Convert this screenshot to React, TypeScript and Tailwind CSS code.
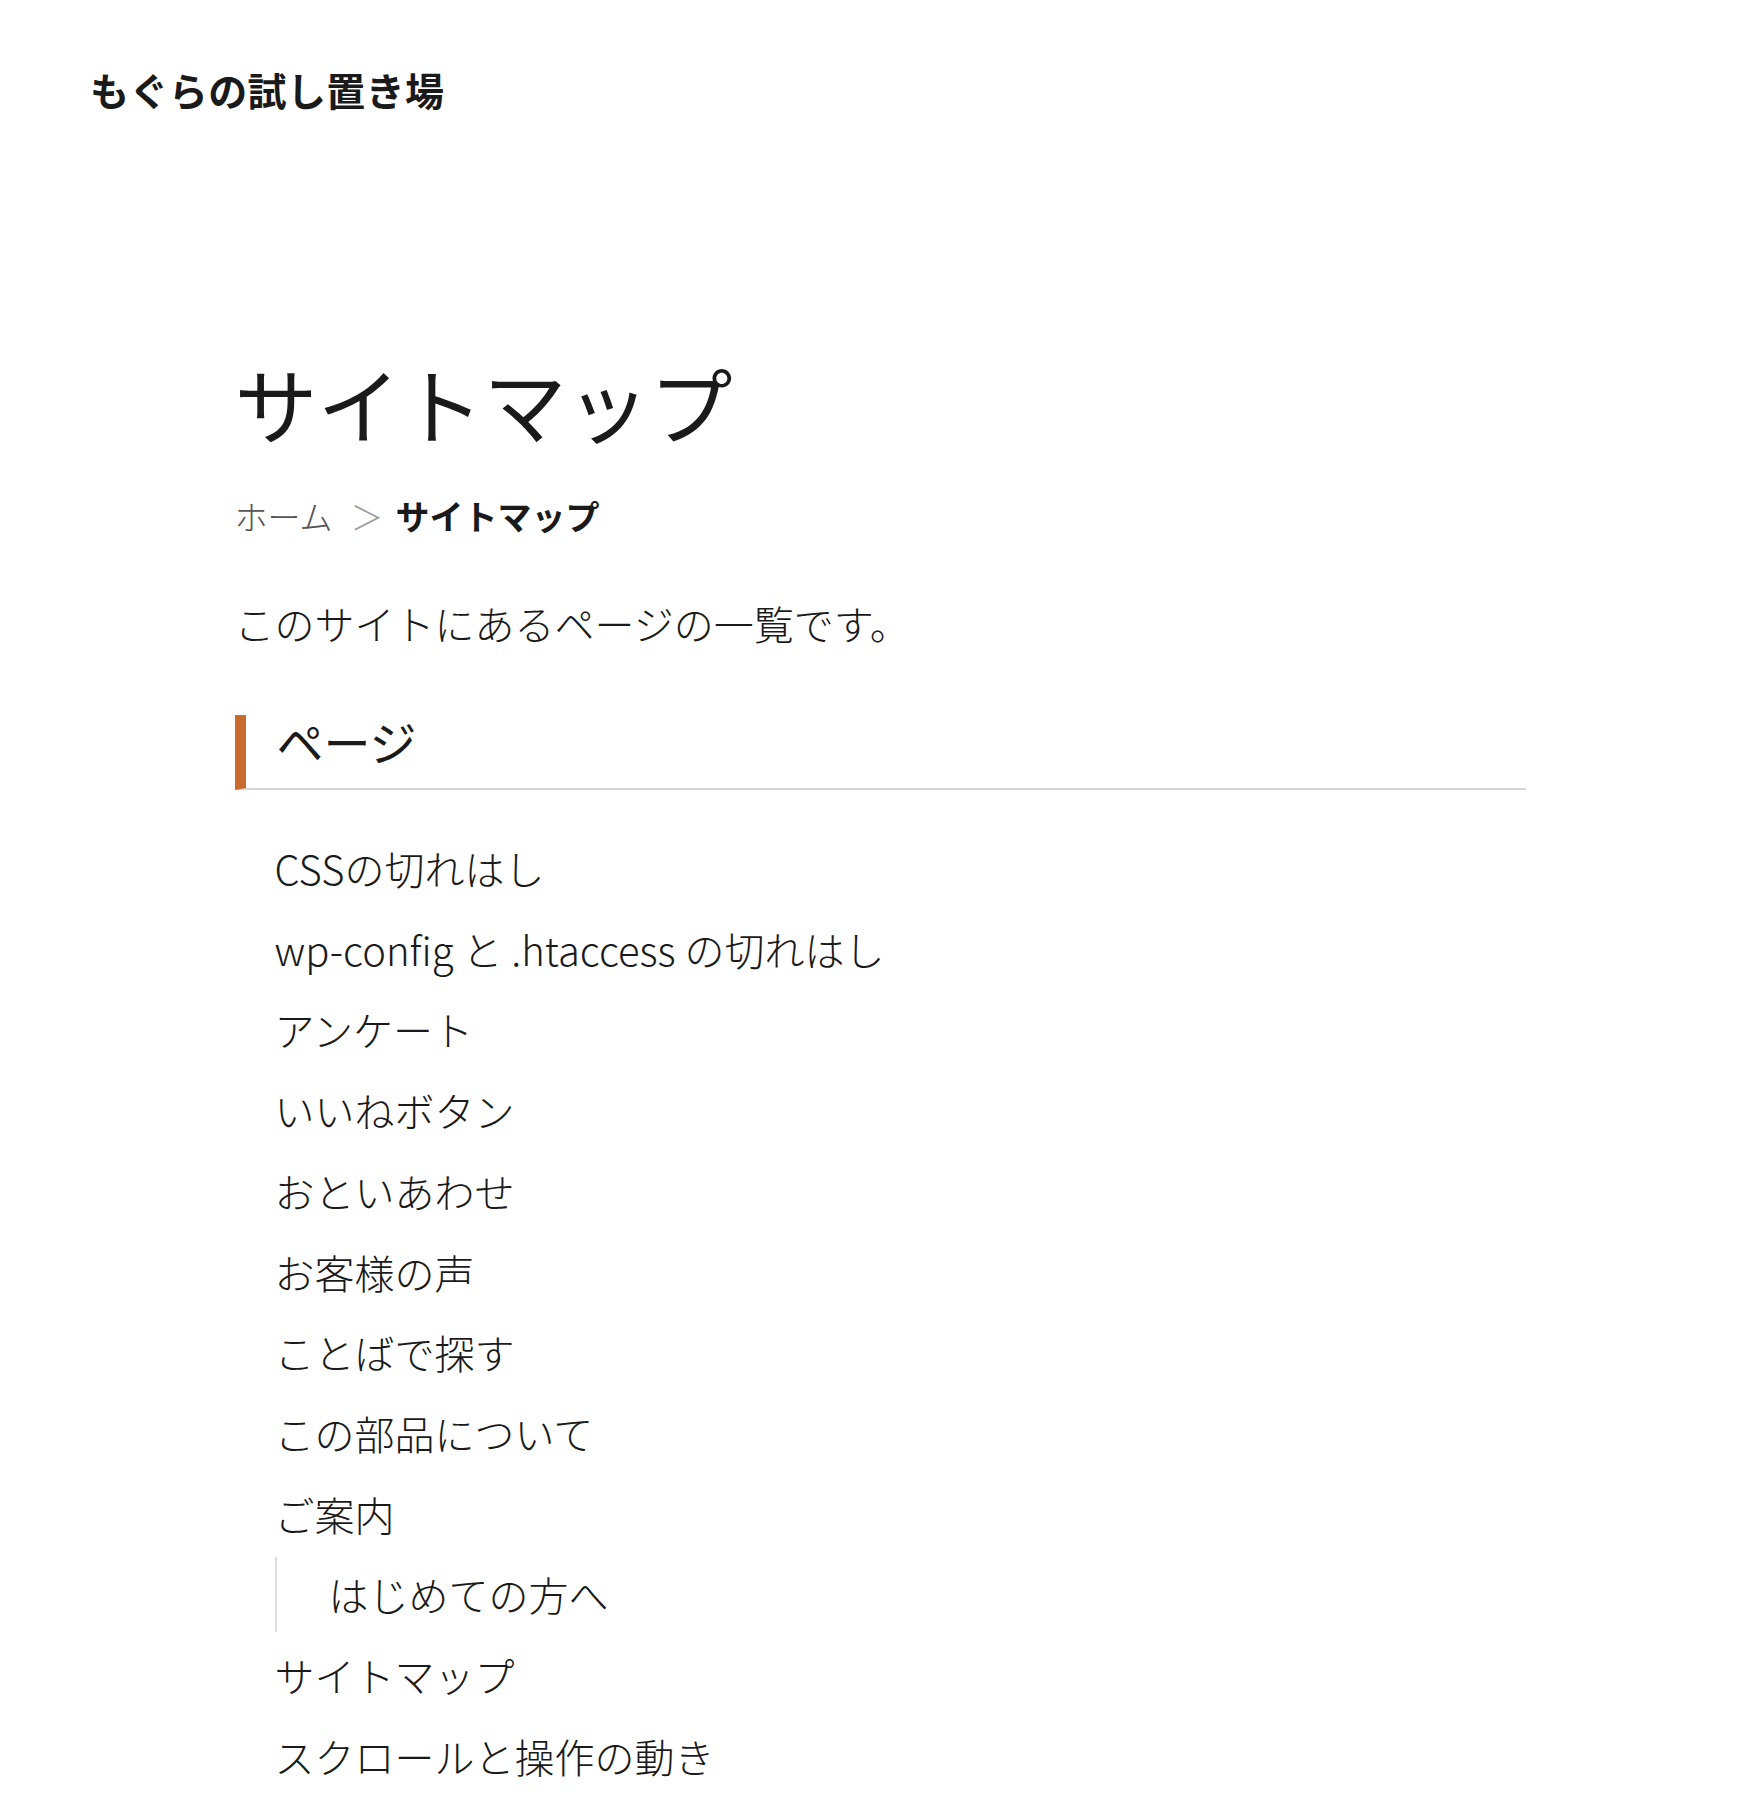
import React from 'react';

type PageItem = {
    label: string;
    children?: string[];
};

const pages: PageItem[] = [
    { label: 'CSSの切れはし' },
    { label: 'wp-config と .htaccess の切れはし' },
    { label: 'アンケート' },
    { label: 'いいねボタン' },
    { label: 'おといあわせ' },
    { label: 'お客様の声' },
    { label: 'ことばで探す' },
    { label: 'この部品について' },
    { label: 'ご案内', children: ['はじめての方へ'] },
    { label: 'サイトマップ' },
    { label: 'スクロールと操作の動き' },
];

export default function App() {
    return (
        <div className="min-h-[1800px] bg-white text-[#1a1a1a] font-['Noto_Sans_CJK_JP','Noto_Sans',sans-serif]">
            {/* Header */}
            <header className="px-[90px] pt-[59px]">
                <p className="text-[39px] font-bold leading-[60px] tracking-[0.01em]">もぐらの試し置き場</p>
            </header>

            <main className="mx-auto w-[1291px] pb-20">
                <h1 className="mt-[224px] text-[83px] font-normal leading-[118px]">サイトマップ</h1>

                {/* Breadcrumb */}
                <nav className="mt-[31px] flex items-center text-[33px] leading-[48px]">
                    <span className="font-light text-[#555]">ホーム</span>
                    <span className="ml-[18px] mr-[12px] font-light text-[#999]">＞</span>
                    <span className="text-[34px] font-bold">サイトマップ</span>
                </nav>

                <p className="mt-[55px] text-[40px] font-light leading-[56px]">
                    このサイトにあるページの一覧です。
                </p>

                {/* Section heading */}
                <h2 className="mt-[64px] border-b-2 border-l-[11px] border-b-[#d6d6d6] border-l-[#c96b2e] pb-[21px] pl-[31px] text-[47px] font-normal leading-[52px]">
                    ページ
                </h2>

                <ul className="mt-[38px] pl-[40px] text-[40px] font-light">
                    {pages.map((p) => (
                        <li key={p.label}>
                            <div className="leading-[80.7px]">{p.label}</div>
                            {p.children && (
                                <ul className="my-[3px] border-l-2 border-[#dedede] pl-[52px]">
                                    {p.children.map((c) => (
                                        <li key={c} className="leading-[75px]">{c}</li>
                                    ))}
                                </ul>
                            )}
                        </li>
                    ))}
                </ul>
            </main>
        </div>
    );
}
